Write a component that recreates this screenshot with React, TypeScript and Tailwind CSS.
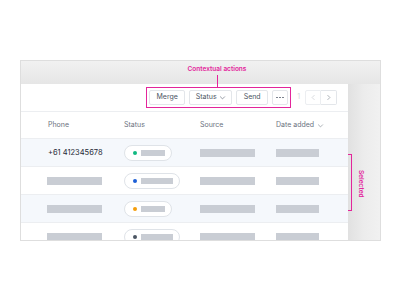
import React from "react";

const PINK = "#e3259b";

const Chevron = ({ dir = "down", className = "" }: { dir?: "down" | "left" | "right"; className?: string }) => {
    const d = dir === "down" ? "M2 4l3 3 3-3" : dir === "left" ? "M6 2L3 5l3 3" : "M4 2l3 3-3 3";
    return (
        <svg viewBox="0 0 10 10" className={className} fill="none" stroke="currentColor" strokeWidth="1" strokeLinecap="round" strokeLinejoin="round">
            <path d={d} />
        </svg>
    );
};

const Btn = ({ children, w }: { children: React.ReactNode; w: string }) => (
    <div className={`${w} h-[15px] flex items-center justify-center gap-[2px] border border-[#e3e6ea] rounded-[2px] bg-white text-[7px] text-[#4b5563]`}>
        {children}
    </div>
);

const Bar = ({ w }: { w: string }) => <div className={`${w} h-[8px] bg-[#c9cdd4] blur-[0.4px]`} />;

// rows: dot colour, pill width, shaded row?
const rows = [
    { dot: "bg-[#10b981]", pill: "w-[48px]", shade: true, phone: "+61 412345678" },
    { dot: "bg-[#1d5fd6]", pill: "w-[56px]", shade: false },
    { dot: "bg-[#f59e0b]", pill: "w-[48px]", shade: true },
    { dot: "bg-[#4b5563]", pill: "w-[56px]", shade: false },
];

export default function App() {
    return (
        <div className="w-[400px] h-[300px] bg-white pt-[60px] pl-[20px]" style={{ fontFamily: "Inter, 'Noto Sans', sans-serif" }}>
            <div className="relative w-[361px] h-[181px] border border-[#dedede] bg-[#ededed] overflow-hidden flex flex-col">
                {/* top gray band */}
                <div className="h-[23px] shrink-0 bg-linear-to-b from-[#f1f1f1] to-[#e6e6e6]" />
                <div className="flex flex-1 min-h-0">
                    {/* table panel */}
                    <div className="w-[327px] bg-white flex flex-col">
                        <div className="h-[28px] shrink-0 flex items-center justify-end pr-[11px] border-b border-[#eceef1]">
                            <div className="flex items-center gap-[4px] p-[2px] border border-[#e3259b]">
                                <Btn w="w-[36px]">Merge</Btn>
                                <Btn w="w-[43px]">
                                    Status <Chevron className="w-[7px] h-[7px] text-[#6b7280]" />
                                </Btn>
                                <Btn w="w-[32px]">Send</Btn>
                                <Btn w="w-[16px]">
                                    <div className="flex gap-[1.5px]">
                                        <div className="w-[1.5px] h-[1.5px] rounded-full bg-[#6b7280]" />
                                        <div className="w-[1.5px] h-[1.5px] rounded-full bg-[#6b7280]" />
                                        <div className="w-[1.5px] h-[1.5px] rounded-full bg-[#6b7280]" />
                                    </div>
                                </Btn>
                            </div>
                            <span className="ml-[6px] text-[7px] text-[#d4d6da]">1</span>
                            <div className="ml-[5px] flex">
                                <div className="w-[16px] h-[15px] border border-[#eceef1] rounded-l-[2px] flex items-center justify-center">
                                    <Chevron dir="left" className="w-[7px] h-[7px] text-[#c9ccd1]" />
                                </div>
                                <div className="w-[16px] h-[15px] border border-l-0 border-[#e3e6ea] rounded-r-[2px] flex items-center justify-center">
                                    <Chevron dir="right" className="w-[7px] h-[7px] text-[#8a9099]" />
                                </div>
                            </div>
                        </div>
                        <div className="h-[27px] shrink-0 grid grid-cols-[76px_76px_76px_1fr] items-center pl-[27px] border-b border-[#eceef1] text-[7px] text-[#6b7280]">
                            <span>Phone</span>
                            <span>Status</span>
                            <span>Source</span>
                            <span className="flex items-center gap-[3px]">
                                Date added <Chevron className="w-[7px] h-[7px] text-[#8a9099]" />
                            </span>
                        </div>
                        {rows.map((r, i) => (
                            <div
                                key={i}
                                className={`h-[28px] shrink-0 grid grid-cols-[76px_76px_76px_1fr] items-center pl-[27px] border-b border-[#eceef1] ${r.shade ? "bg-[#f5f8fc]" : "bg-white"}`}
                            >
                                {r.phone ? (
                                    <span className="text-[7.5px] text-[#1f2937]">{r.phone}</span>
                                ) : (
                                    <div className="-ml-[1px]"><Bar w="w-[55px]" /></div>
                                )}
                                <div className={`${r.pill} h-[16px] rounded-full border border-[#dfe3e8] bg-white flex items-center pl-[8px] gap-[4px]`}>
                                    <div className={`w-[4px] h-[4px] rounded-full ${r.dot}`} />
                                    <div className={`${r.pill === "w-[48px]" ? "w-[24px]" : "w-[32px]"} h-[6px] bg-[#c9cdd4] blur-[0.4px]`} />
                                </div>
                                <Bar w="w-[55px]" />
                                <Bar w="w-[43px]" />
                            </div>
                        ))}
                    </div>
                    {/* right gray band */}
                    <div className="flex-1 bg-linear-to-r from-[#e1e1e1] via-[#ececec] to-[#f1f1f1]" />
                </div>

                {/* annotations */}
                <div className="absolute left-[196px] top-[5px] -translate-x-1/2 text-[6.5px] font-semibold leading-none whitespace-nowrap" style={{ color: PINK }}>
                    Contextual actions
                </div>
                <div className="absolute left-[196px] top-[14px] w-px h-[13px] bg-[#e3259b]" />
                <div className="absolute left-[327px] top-[93px] w-[4px] h-[57px] border-t border-r border-b border-[#e3259b]" />
                <div className="absolute left-[336px] top-[109px] text-[6.5px] font-semibold leading-none [writing-mode:vertical-rl]" style={{ color: PINK }}>
                    Selected
                </div>
            </div>
        </div>
    );
}
